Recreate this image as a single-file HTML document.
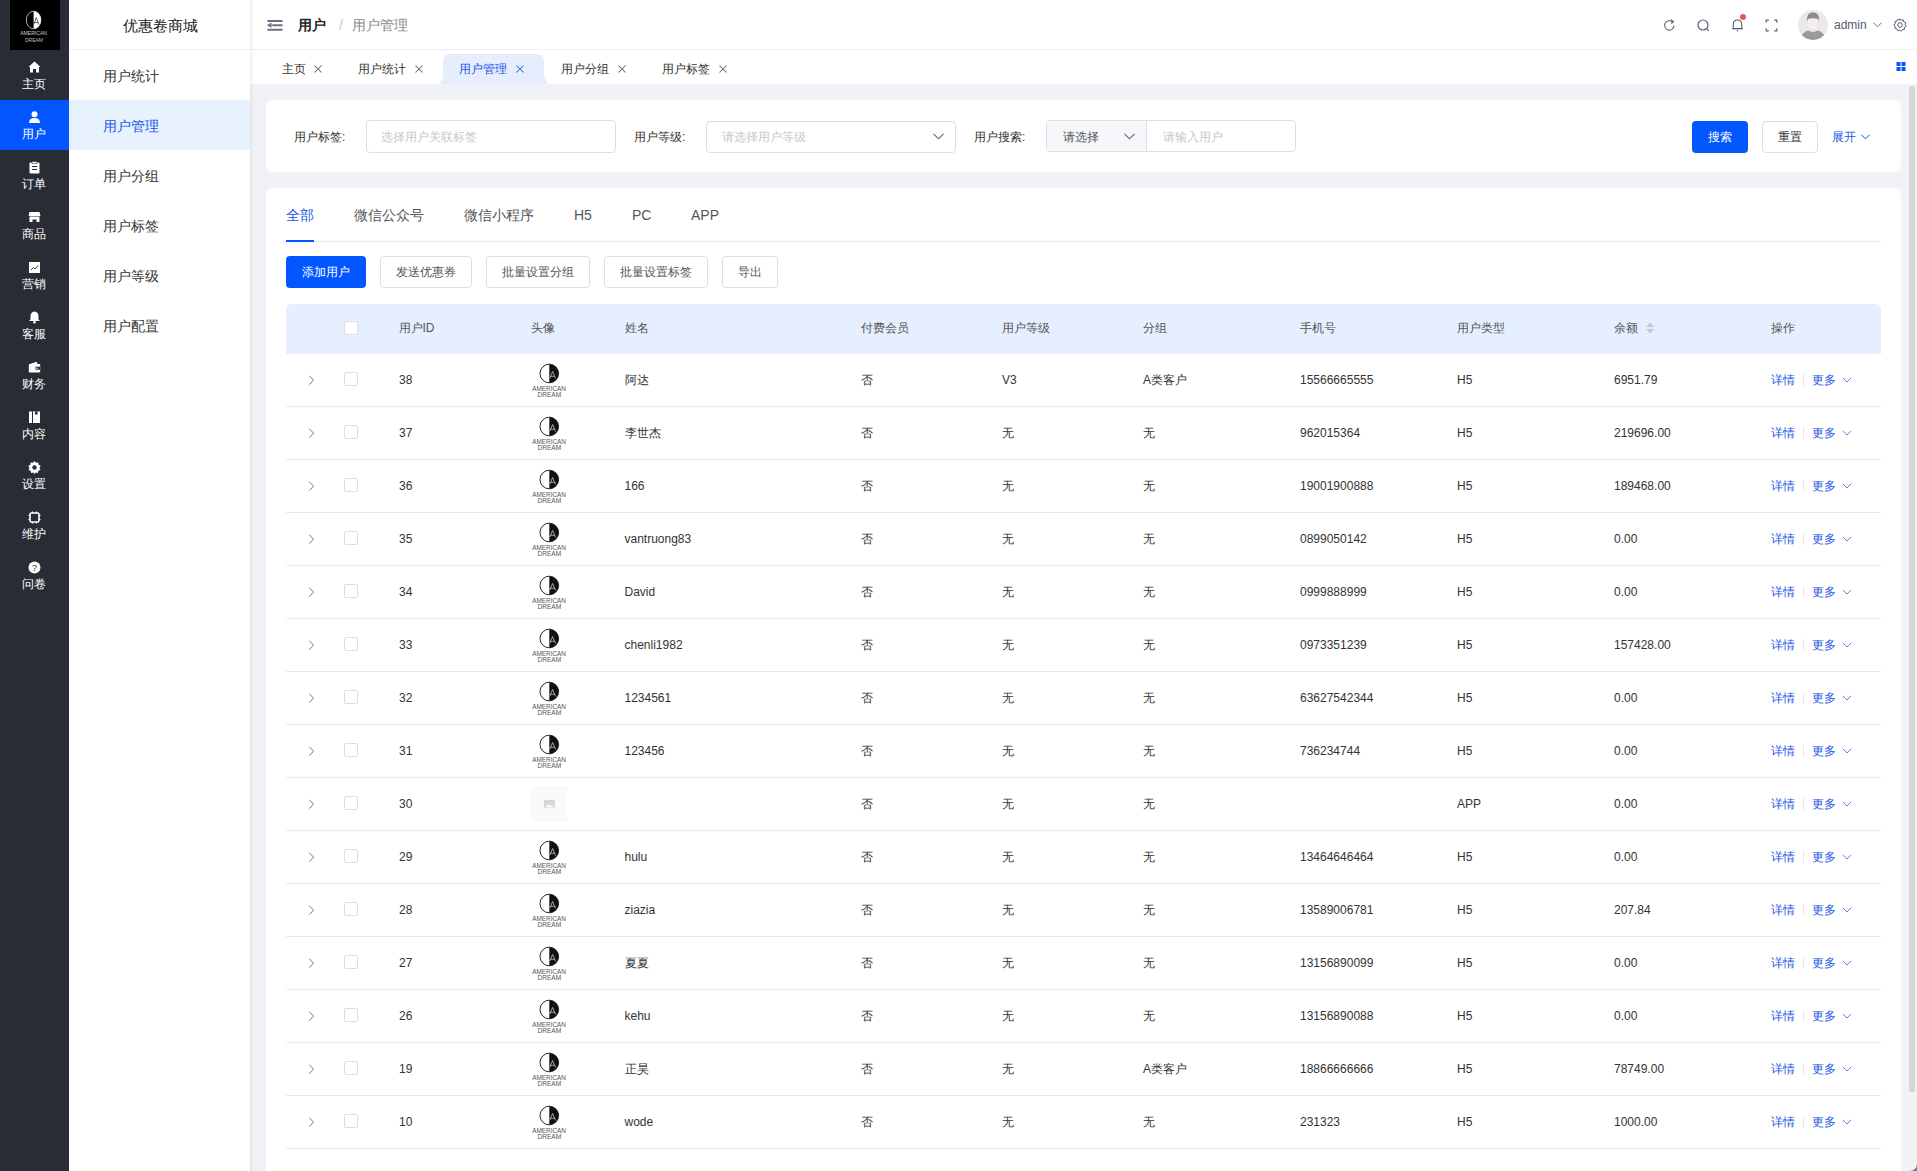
<!DOCTYPE html><html><head><meta charset="utf-8"><style>
*{box-sizing:border-box;margin:0;padding:0}
html,body{width:1917px;height:1171px;overflow:hidden;background:#f0f2f5;font-family:"Liberation Sans",sans-serif;}
.a{position:absolute}
.t{position:absolute;line-height:20px;white-space:nowrap}
svg{position:absolute;overflow:visible}
</style></head><body>
<div class="a" style="left:0;top:0;width:69px;height:1171px;background:#282c35"></div>
<div class="a" style="left:10px;top:0;width:50px;height:50px;background:#000"></div>
<svg style="left:10px;top:0" width="50" height="50" viewBox="0 0 50 50">
<ellipse cx="23.6" cy="20" rx="7.3" ry="8.8" fill="#000" stroke="#ddd" stroke-width="0.8"/>
<path d="M23.6 11.2 A7.3 8.8 0 0 1 23.6 28.8 Z" fill="#fff"/>
<path d="M23.8 24.5 L26.3 17.5 L28.8 24.5 M24.6 22.5 H28" fill="none" stroke="#000" stroke-width="0.6"/>
<text x="10.2" y="35.2" font-size="5.6" fill="#ccc" font-family="Liberation Sans" textLength="26.8" lengthAdjust="spacingAndGlyphs">AMERICAN</text>
<text x="14.9" y="41.6" font-size="5.6" fill="#bbb" font-family="Liberation Sans" textLength="18.1" lengthAdjust="spacingAndGlyphs">DREAM</text>
</svg>
<div class="t" style="left:22px;top:74.0px;font-size:12px;color:#fff;font-weight:500;">主页</div>
<div class="a ic0" style="left:28px;top:61px;width:13px;height:13px"></div>
<div class="a" style="left:0;top:100px;width:69px;height:50px;background:#0256ff"></div>
<div class="t" style="left:22px;top:124.0px;font-size:12px;color:#fff;font-weight:500;">用户</div>
<div class="a ic1" style="left:28px;top:111px;width:13px;height:13px"></div>
<div class="t" style="left:22px;top:174.0px;font-size:12px;color:#fff;font-weight:500;">订单</div>
<div class="a ic2" style="left:28px;top:161px;width:13px;height:13px"></div>
<div class="t" style="left:22px;top:224.0px;font-size:12px;color:#fff;font-weight:500;">商品</div>
<div class="a ic3" style="left:28px;top:211px;width:13px;height:13px"></div>
<div class="t" style="left:22px;top:274.0px;font-size:12px;color:#fff;font-weight:500;">营销</div>
<div class="a ic4" style="left:28px;top:261px;width:13px;height:13px"></div>
<div class="t" style="left:22px;top:324.0px;font-size:12px;color:#fff;font-weight:500;">客服</div>
<div class="a ic5" style="left:28px;top:311px;width:13px;height:13px"></div>
<div class="t" style="left:22px;top:374.0px;font-size:12px;color:#fff;font-weight:500;">财务</div>
<div class="a ic6" style="left:28px;top:361px;width:13px;height:13px"></div>
<div class="t" style="left:22px;top:424.0px;font-size:12px;color:#fff;font-weight:500;">内容</div>
<div class="a ic7" style="left:28px;top:411px;width:13px;height:13px"></div>
<div class="t" style="left:22px;top:474.0px;font-size:12px;color:#fff;font-weight:500;">设置</div>
<div class="a ic8" style="left:28px;top:461px;width:13px;height:13px"></div>
<div class="t" style="left:22px;top:524.0px;font-size:12px;color:#fff;font-weight:500;">维护</div>
<div class="a ic9" style="left:28px;top:511px;width:13px;height:13px"></div>
<div class="t" style="left:22px;top:574.0px;font-size:12px;color:#fff;font-weight:500;">问卷</div>
<div class="a ic10" style="left:28px;top:561px;width:13px;height:13px"></div>
<svg style="left:28px;top:61px" width="13" height="13" viewBox="0 0 13 13"><path d="M6.5 0.5 L12.5 6 L11 6 L11 11.5 L8 11.5 L8 8 L5 8 L5 11.5 L2 11.5 L2 6 L0.5 6 Z" fill="#fff"/></svg>
<svg style="left:28px;top:111px" width="13" height="13" viewBox="0 0 13 13"><circle cx="6.5" cy="3.2" r="3" fill="#fff"/><path d="M1 12 Q1 7 6.5 7 Q12 7 12 12 Z" fill="#fff"/></svg>
<svg style="left:28px;top:161px" width="13" height="13" viewBox="0 0 13 13"><rect x="1.5" y="1.5" width="10" height="11" rx="1" fill="#fff"/><rect x="4" y="0.5" width="5" height="2" fill="#fff" stroke="#282c35" stroke-width="0.6"/><rect x="4" y="5" width="5" height="1" fill="#282c35"/><rect x="4" y="8" width="5" height="1" fill="#282c35"/></svg>
<svg style="left:28px;top:211px" width="13" height="13" viewBox="0 0 13 13"><path d="M1.5 1 L11.5 1 L12.5 5 L0.5 5 Z" fill="#fff"/><path d="M1.5 5.5 L11.5 5.5 L11.5 11 L8.5 11 L8.5 8.5 L4.5 8.5 L4.5 11 L1.5 11 Z" fill="#fff"/></svg>
<svg style="left:28px;top:261px" width="13" height="13" viewBox="0 0 13 13"><rect x="1" y="1" width="11" height="11" fill="#fff"/><path d="M3 9 L5.5 6.5 L7 8 L10 4.5" fill="none" stroke="#282c35" stroke-width="0.9"/></svg>
<svg style="left:28px;top:311px" width="13" height="13" viewBox="0 0 13 13"><path d="M6.5 0.5 Q10.5 1 10.5 5.5 L10.5 8.5 L12 10 L1 10 L2.5 8.5 L2.5 5.5 Q2.5 1 6.5 0.5 Z" fill="#fff"/><circle cx="6.5" cy="11.3" r="1.3" fill="#fff"/></svg>
<svg style="left:28px;top:361px" width="13" height="13" viewBox="0 0 13 13"><path d="M2 3 L8.5 0.8 L9.5 3 Z" fill="#fff"/><rect x="0.8" y="3" width="11.4" height="8.5" rx="1" fill="#fff"/><rect x="7.5" y="5.7" width="4.7" height="3" fill="#282c35"/><circle cx="9" cy="7.2" r="0.8" fill="#fff"/></svg>
<svg style="left:28px;top:411px" width="13" height="13" viewBox="0 0 13 13"><rect x="1" y="0.5" width="11" height="11.5" fill="#fff"/><rect x="4" y="0.5" width="1" height="11.5" fill="#282c35"/><path d="M7 0.5 L9.5 0.5 L9.5 4 L8.25 3 L7 4 Z" fill="#282c35"/></svg>
<svg style="left:28px;top:461px" width="13" height="13" viewBox="0 0 13 13"><path d="M6.5 0 L8 1.8 L10.3 1.5 L10.7 3.8 L12.7 5 L11.5 7 L12.5 9 L10.3 9.8 L10 12 L7.8 11.5 L6.5 13 L5.2 11.5 L3 12 L2.7 9.8 L0.5 9 L1.5 7 L0.3 5 L2.3 3.8 L2.7 1.5 L5 1.8 Z" fill="#fff"/><circle cx="6.5" cy="6.5" r="2.2" fill="#282c35"/></svg>
<svg style="left:28px;top:511px" width="13" height="13" viewBox="0 0 13 13"><rect x="2" y="2" width="9" height="9" rx="1.5" fill="none" stroke="#fff" stroke-width="1.6"/><path d="M4.5 0.5v1.5M8.5 0.5v1.5M4.5 11v1.5M8.5 11v1.5M0.5 4.5h1.5M0.5 8.5h1.5M11 4.5h1.5M11 8.5h1.5" stroke="#fff" stroke-width="1.2"/></svg>
<svg style="left:28px;top:561px" width="13" height="13" viewBox="0 0 13 13"><circle cx="6.5" cy="6.5" r="6" fill="#fff"/><text x="6.5" y="10" font-size="9" fill="#282c35" text-anchor="middle" font-family="Liberation Sans">?</text></svg>
<div class="a" style="left:69px;top:0;width:181px;height:1171px;background:#fff"></div>
<div class="a" style="left:69px;top:49px;width:181px;height:1px;background:#eef0f4"></div>
<div class="t" style="left:122.5px;top:16.0px;font-size:15px;color:#1a1a1a;font-weight:normal;">优惠卷商城</div>
<div class="t" style="left:103px;top:65.5px;font-size:14px;color:#333;font-weight:normal;">用户统计</div>
<div class="a" style="left:69px;top:100px;width:181px;height:50px;background:#e8f2ff"></div>
<div class="t" style="left:103px;top:115.5px;font-size:14px;color:#1a56e6;font-weight:normal;">用户管理</div>
<div class="t" style="left:103px;top:165.5px;font-size:14px;color:#333;font-weight:normal;">用户分组</div>
<div class="t" style="left:103px;top:215.5px;font-size:14px;color:#333;font-weight:normal;">用户标签</div>
<div class="t" style="left:103px;top:265.5px;font-size:14px;color:#333;font-weight:normal;">用户等级</div>
<div class="t" style="left:103px;top:315.5px;font-size:14px;color:#333;font-weight:normal;">用户配置</div>
<div class="a" style="left:250px;top:84px;width:6px;height:1087px;background:linear-gradient(90deg,#e1e3e7,#edeff2 50%,#f0f2f5)"></div>
<div class="a" style="left:250px;top:0;width:1667px;height:49px;background:#fff"></div>
<div class="a" style="left:250px;top:49px;width:1667px;height:1px;background:#eef0f4"></div>
<svg style="left:266px;top:18px" width="16" height="14" viewBox="0 0 16 14">
<path d="M2.2 3h13.6M7 7.2h8.8M2.2 11.8h13.6" stroke="#6b7080" stroke-width="2" stroke-linecap="round"/>
<path d="M5.2 5.2 L1.5 7.2 L5.2 9.2 Z" fill="#6b7080" stroke="#6b7080" stroke-width="0.8" stroke-linejoin="round"/>
</svg>
<div class="t" style="left:298px;top:14.5px;font-size:14px;color:#222;font-weight:bold;">用户</div>
<div class="t" style="left:339px;top:14.5px;font-size:14px;color:#c0c4cc;font-weight:normal;">/</div>
<div class="t" style="left:352px;top:14.5px;font-size:14px;color:#888;font-weight:normal;">用户管理</div>
<svg style="left:1663px;top:19px" width="13" height="13" viewBox="0 0 13 13">
<path d="M11 6.5 A4.7 4.7 0 1 1 9.3 2.8" fill="none" stroke="#5c6170" stroke-width="1.1"/>
<path d="M8 0.8 L10.5 2.5 L8.3 4.5" fill="none" stroke="#5c6170" stroke-width="1.1"/>
</svg>
<svg style="left:1697px;top:19px" width="13" height="13" viewBox="0 0 13 13">
<circle cx="6" cy="6" r="5" fill="none" stroke="#5c6170" stroke-width="1.2"/>
<path d="M9.6 9.6 L11.8 11.8" stroke="#5c6170" stroke-width="1.2"/>
</svg>
<svg style="left:1731px;top:18px" width="13" height="14" viewBox="0 0 13 14">
<path d="M2.3 10.5 V6.5 Q2.3 2 6.5 2 Q10.7 2 10.7 6.5 V10.5 Z" fill="none" stroke="#5c6170" stroke-width="1.1"/>
<path d="M1 10.8 H12" stroke="#5c6170" stroke-width="1.1"/>
<circle cx="6.5" cy="12.8" r="0.7" fill="#5c6170"/>
</svg>
<div class="a" style="left:1740px;top:14px;width:6px;height:6px;border-radius:50%;background:#ee5555"></div>
<svg style="left:1765px;top:19px" width="13" height="13" viewBox="0 0 13 13">
<path d="M1.2 3.8V1.2H3.8M9.2 1.2H11.8V3.8M11.8 9.2V11.8H9.2M3.8 11.8H1.2V9.2" fill="none" stroke="#5c6170" stroke-width="1.2"/>
</svg>
<svg style="left:1798px;top:10px" width="30" height="30" viewBox="0 0 30 30">
<defs><clipPath id="avc"><circle cx="15" cy="15" r="15"/></clipPath></defs>
<g clip-path="url(#avc)">
<rect width="30" height="30" fill="#e9e9e9"/>
<path d="M2 31 Q3 22.5 10 20.5 Q15 23 20 20.5 Q27 22.5 28 31 Z" fill="#9a9a9a"/>
<path d="M10.5 17 Q11 21.5 15 22 Q19 21.5 19.5 17 Z" fill="#e6dedc"/>
<ellipse cx="15" cy="13.2" rx="5.6" ry="7.2" fill="#f3eeec"/>
<path d="M9 12.5 Q8 2.2 15 2.2 Q22 2.2 21 12.5 L20.3 9 Q15 7.5 9.7 9 Z" fill="#8c8c8c"/>
</g></svg>
<div class="t" style="left:1834px;top:14.5px;font-size:12px;color:#515a6e;font-weight:normal;">admin</div>
<svg style="left:1873px;top:22px" width="9" height="6" viewBox="0 0 9 6">
<path d="M0.5 0.8 L4.5 4.8 L8.5 0.8" fill="none" stroke="#777" stroke-width="1"/></svg>
<svg style="left:1893px;top:18px" width="14" height="14" viewBox="0 0 14 14">
<path d="M7 0.8 L8.3 2.3 L10.3 1.9 L10.8 3.9 L12.7 4.7 L12 6.6 L13.2 8.3 L11.5 9.4 L11.4 11.4 L9.4 11.5 L8.3 13.2 L6.6 12 L4.7 12.7 L3.9 10.8 L1.9 10.3 L2.3 8.3 L0.8 7 L2.3 5.7 L1.9 3.7 L3.9 3.2 L4.7 1.3 L6.6 2 Z" fill="none" stroke="#5c6170" stroke-width="1" stroke-linejoin="round"/>
<circle cx="7" cy="7" r="2.3" fill="none" stroke="#5c6170" stroke-width="1"/>
</svg>
<div class="a" style="left:250px;top:50px;width:1667px;height:34px;background:#fff"></div>
<svg style="left:439px;top:54px" width="110" height="30" viewBox="0 0 110 30">
<path d="M0.5 30 L4 23 V7.5 Q4 0 11.5 0 H97.5 Q105 0 105 7.5 V23 L109.5 30 Z" fill="#e6eefd"/></svg>
<div class="t" style="left:282px;top:59.0px;font-size:12px;color:#333;font-weight:normal;">主页</div>
<svg style="left:314px;top:65px" width="8" height="8" viewBox="0 0 8 8"><path d="M0.5 0.5 L7.5 7.5 M7.5 0.5 L0.5 7.5" stroke="#666" stroke-width="1.05"/></svg>
<div class="t" style="left:358px;top:59.0px;font-size:12px;color:#333;font-weight:normal;">用户统计</div>
<svg style="left:415px;top:65px" width="8" height="8" viewBox="0 0 8 8"><path d="M0.5 0.5 L7.5 7.5 M7.5 0.5 L0.5 7.5" stroke="#666" stroke-width="1.05"/></svg>
<div class="t" style="left:459px;top:59.0px;font-size:12px;color:#1a56e6;font-weight:normal;">用户管理</div>
<svg style="left:516px;top:65px" width="8" height="8" viewBox="0 0 8 8"><path d="M0.5 0.5 L7.5 7.5 M7.5 0.5 L0.5 7.5" stroke="#2f6bea" stroke-width="1.05"/></svg>
<div class="t" style="left:561px;top:59.0px;font-size:12px;color:#333;font-weight:normal;">用户分组</div>
<svg style="left:618px;top:65px" width="8" height="8" viewBox="0 0 8 8"><path d="M0.5 0.5 L7.5 7.5 M7.5 0.5 L0.5 7.5" stroke="#666" stroke-width="1.05"/></svg>
<div class="t" style="left:662px;top:59.0px;font-size:12px;color:#333;font-weight:normal;">用户标签</div>
<svg style="left:719px;top:65px" width="8" height="8" viewBox="0 0 8 8"><path d="M0.5 0.5 L7.5 7.5 M7.5 0.5 L0.5 7.5" stroke="#666" stroke-width="1.05"/></svg>
<svg style="left:1896px;top:62px" width="10" height="9" viewBox="0 0 10 9">
<rect x="0.5" y="0" width="4" height="4" fill="#0256ff"/><rect x="5.5" y="0" width="4" height="4" fill="#0256ff"/>
<rect x="0.5" y="5" width="4" height="4" fill="#0256ff"/><rect x="5.5" y="5" width="4" height="4" fill="#0256ff"/></svg>
<div class="a" style="left:250px;top:0;width:5px;height:84px;background:linear-gradient(90deg,#eceef2,#f8f9fb 50%,rgba(255,255,255,0))"></div>
<div class="a" style="left:250px;top:49px;width:5px;height:1px;background:#e6e8ec"></div>
<div class="a" style="left:1909px;top:86px;width:6px;height:1006px;border-radius:3px;background:#d3d5d9"></div>
<div class="a" style="left:266px;top:100px;width:1635px;height:72px;background:#fff;border-radius:6px"></div>
<div class="t" style="left:294px;top:126.5px;font-size:12px;color:#333;font-weight:normal;">用户标签:</div>
<div class="a" style="left:366px;top:120px;width:250px;height:33px;border:1px solid #dcdee2;border-radius:4px;background:#fff"></div>
<div class="t" style="left:381px;top:127.0px;font-size:12px;color:#c5c8ce;font-weight:normal;">选择用户关联标签</div>
<div class="t" style="left:634px;top:126.5px;font-size:12px;color:#333;font-weight:normal;">用户等级:</div>
<div class="a" style="left:706px;top:121px;width:250px;height:32px;border:1px solid #dcdee2;border-radius:4px;background:#fff"></div>
<div class="t" style="left:722px;top:127.0px;font-size:12px;color:#c5c8ce;font-weight:normal;">请选择用户等级</div>
<svg style="left:933px;top:133px" width="11" height="7" viewBox="0 0 11 7"><path d="M0.5 0.8 L5.5 5.8 L10.5 0.8" fill="none" stroke="#666" stroke-width="1.1"/></svg>
<div class="t" style="left:974px;top:126.5px;font-size:12px;color:#333;font-weight:normal;">用户搜索:</div>
<div class="a" style="left:1046px;top:120px;width:250px;height:32px;border:1px solid #dcdee2;border-radius:4px;background:#fff"></div>
<div class="a" style="left:1047px;top:121px;width:100px;height:30px;border-right:1px solid #dcdee2;border-radius:3px 0 0 3px;background:#f5f7fa"></div>
<div class="t" style="left:1063px;top:127.0px;font-size:12px;color:#555;font-weight:normal;">请选择</div>
<svg style="left:1124px;top:133px" width="11" height="7" viewBox="0 0 11 7"><path d="M0.5 0.8 L5.5 5.8 L10.5 0.8" fill="none" stroke="#666" stroke-width="1.1"/></svg>
<div class="t" style="left:1163px;top:126.5px;font-size:12px;color:#c5c8ce;font-weight:normal;">请输入用户</div>
<div class="a" style="left:1692px;top:121px;width:56px;height:32px;border-radius:4px;background:#0256ff"></div>
<div class="t" style="left:1708px;top:126.5px;font-size:12px;color:#fff;font-weight:normal;">搜索</div>
<div class="a" style="left:1762px;top:121px;width:56px;height:32px;border-radius:4px;border:1px solid #dcdee2;background:#fff"></div>
<div class="t" style="left:1778px;top:126.5px;font-size:12px;color:#333;font-weight:normal;">重置</div>
<div class="t" style="left:1832px;top:127.0px;font-size:12px;color:#1a56e6;font-weight:normal;">展开</div>
<svg style="left:1861px;top:134px" width="9" height="6" viewBox="0 0 9 6"><path d="M0.5 0.8 L4.5 4.8 L8.5 0.8" fill="none" stroke="#0256ff" stroke-width="1"/></svg>
<div class="a" style="left:266px;top:188px;width:1635px;height:1000px;background:#fff;border-radius:6px"></div>
<div class="t" style="left:286px;top:204.5px;font-size:14px;color:#1a56e6;font-weight:normal;">全部</div>
<div class="t" style="left:354px;top:204.5px;font-size:14px;color:#555;font-weight:normal;">微信公众号</div>
<div class="t" style="left:464px;top:204.5px;font-size:14px;color:#555;font-weight:normal;">微信小程序</div>
<div class="t" style="left:574px;top:204.5px;font-size:14px;color:#555;font-weight:normal;">H5</div>
<div class="t" style="left:632px;top:204.5px;font-size:14px;color:#555;font-weight:normal;">PC</div>
<div class="t" style="left:691px;top:204.5px;font-size:14px;color:#555;font-weight:normal;">APP</div>
<div class="a" style="left:286px;top:241px;width:1595px;height:1px;background:#e8eaec"></div>
<div class="a" style="left:286px;top:240px;width:28px;height:2px;background:#0256ff"></div>
<div class="a" style="left:286px;top:256px;width:80px;height:32px;border-radius:4px;background:#0256ff"></div>
<div class="t" style="left:302px;top:261.5px;font-size:12px;color:#fff;font-weight:normal;">添加用户</div>
<div class="a" style="left:380px;top:256px;width:92px;height:32px;border-radius:4px;border:1px solid #dcdee2;background:#fff"></div>
<div class="t" style="left:396px;top:261.5px;font-size:12px;color:#555;font-weight:normal;">发送优惠券</div>
<div class="a" style="left:486px;top:256px;width:104px;height:32px;border-radius:4px;border:1px solid #dcdee2;background:#fff"></div>
<div class="t" style="left:502px;top:261.5px;font-size:12px;color:#555;font-weight:normal;">批量设置分组</div>
<div class="a" style="left:604px;top:256px;width:104px;height:32px;border-radius:4px;border:1px solid #dcdee2;background:#fff"></div>
<div class="t" style="left:620px;top:261.5px;font-size:12px;color:#555;font-weight:normal;">批量设置标签</div>
<div class="a" style="left:722px;top:256px;width:56px;height:32px;border-radius:4px;border:1px solid #dcdee2;background:#fff"></div>
<div class="t" style="left:738px;top:261.5px;font-size:12px;color:#555;font-weight:normal;">导出</div>
<div class="a" style="left:286px;top:304px;width:1595px;height:50px;background:#e5efff;border-radius:5px 5px 0 0"></div>
<div class="t" style="left:398.5px;top:317.5px;font-size:12px;color:#555;font-weight:normal;">用户ID</div>
<div class="t" style="left:531px;top:317.5px;font-size:12px;color:#555;font-weight:normal;">头像</div>
<div class="t" style="left:624.5px;top:317.5px;font-size:12px;color:#555;font-weight:normal;">姓名</div>
<div class="t" style="left:861px;top:317.5px;font-size:12px;color:#555;font-weight:normal;">付费会员</div>
<div class="t" style="left:1002px;top:317.5px;font-size:12px;color:#555;font-weight:normal;">用户等级</div>
<div class="t" style="left:1143px;top:317.5px;font-size:12px;color:#555;font-weight:normal;">分组</div>
<div class="t" style="left:1300px;top:317.5px;font-size:12px;color:#555;font-weight:normal;">手机号</div>
<div class="t" style="left:1457px;top:317.5px;font-size:12px;color:#555;font-weight:normal;">用户类型</div>
<div class="t" style="left:1614px;top:317.5px;font-size:12px;color:#555;font-weight:normal;">余额</div>
<div class="t" style="left:1771px;top:317.5px;font-size:12px;color:#555;font-weight:normal;">操作</div>
<div class="a" style="left:344px;top:321px;width:14px;height:14px;border:1px solid #dcdee2;border-radius:2px;background:#fff"></div>
<svg style="left:1645px;top:322px" width="10" height="12" viewBox="0 0 10 12"><path d="M5 0.5 L9 5 L1 5 Z" fill="#c5c8ce"/><path d="M5 11.5 L9 7 L1 7 Z" fill="#c5c8ce"/></svg>
<div class="a" style="left:286px;top:406px;width:1595px;height:1px;background:#e8eaec"></div>
<svg style="left:309px;top:375.0px" width="6" height="10" viewBox="0 0 6 10"><path d="M0.3 0.8 L4.6 5.2 L0.3 9.6" fill="none" stroke="#777" stroke-width="1"/></svg>
<div class="a" style="left:344px;top:372.0px;width:14px;height:14px;border:1px solid #dcdee2;border-radius:2px;background:#fff"></div>
<div class="t" style="left:399px;top:370.0px;font-size:12px;color:#333;font-weight:normal;">38</div>
<svg style="left:531px;top:361.5px" width="36" height="36" viewBox="0 0 36 36">
<circle cx="18.3" cy="11.5" r="9.3" fill="none" stroke="#111" stroke-width="0.9"/>
<path d="M18.3 2.2 A9.3 9.3 0 0 1 18.3 20.8 Z" fill="#111"/>
<path d="M18.6 16.5 L21.6 9.5 L24.6 16.5 M19.6 14.3 H23.6" fill="none" stroke="#fff" stroke-width="0.6"/>
<path d="M18.3 16 L18.6 16.5" stroke="#111" stroke-width="0.6"/>
<text x="1.2" y="28.5" font-size="6.8" fill="#555" font-family="Liberation Sans" textLength="33.7" lengthAdjust="spacingAndGlyphs">AMERICAN</text>
<text x="6.5" y="35.3" font-size="6.8" fill="#555" font-family="Liberation Sans" textLength="23.6" lengthAdjust="spacingAndGlyphs">DREAM</text>
</svg>
<div class="t" style="left:624.5px;top:370.0px;font-size:12px;color:#333;font-weight:normal;">阿达</div>
<div class="t" style="left:861px;top:370.0px;font-size:12px;color:#333;font-weight:normal;">否</div>
<div class="t" style="left:1002px;top:370.0px;font-size:12px;color:#333;font-weight:normal;">V3</div>
<div class="t" style="left:1143px;top:370.0px;font-size:12px;color:#333;font-weight:normal;">A类客户</div>
<div class="t" style="left:1300px;top:370.0px;font-size:12px;color:#333;font-weight:normal;">15566665555</div>
<div class="t" style="left:1457px;top:370.0px;font-size:12px;color:#333;font-weight:normal;">H5</div>
<div class="t" style="left:1614px;top:370.0px;font-size:12px;color:#333;font-weight:normal;">6951.79</div>
<div class="t" style="left:1771px;top:370.0px;font-size:12px;color:#1a56e6;font-weight:normal;">详情</div>
<div class="a" style="left:1803px;top:373.5px;width:1px;height:12px;background:#e6e8ee"></div>
<div class="t" style="left:1812px;top:370.0px;font-size:12px;color:#1a56e6;font-weight:normal;">更多</div>
<svg style="left:1842px;top:377.0px" width="10" height="6" viewBox="0 0 10 6"><path d="M0.8 0.8 L5 5 L9.2 0.8" fill="none" stroke="#4d75dc" stroke-width="0.9"/></svg>
<div class="a" style="left:286px;top:459px;width:1595px;height:1px;background:#e8eaec"></div>
<svg style="left:309px;top:428.0px" width="6" height="10" viewBox="0 0 6 10"><path d="M0.3 0.8 L4.6 5.2 L0.3 9.6" fill="none" stroke="#777" stroke-width="1"/></svg>
<div class="a" style="left:344px;top:425.0px;width:14px;height:14px;border:1px solid #dcdee2;border-radius:2px;background:#fff"></div>
<div class="t" style="left:399px;top:423.0px;font-size:12px;color:#333;font-weight:normal;">37</div>
<svg style="left:531px;top:414.5px" width="36" height="36" viewBox="0 0 36 36">
<circle cx="18.3" cy="11.5" r="9.3" fill="none" stroke="#111" stroke-width="0.9"/>
<path d="M18.3 2.2 A9.3 9.3 0 0 1 18.3 20.8 Z" fill="#111"/>
<path d="M18.6 16.5 L21.6 9.5 L24.6 16.5 M19.6 14.3 H23.6" fill="none" stroke="#fff" stroke-width="0.6"/>
<path d="M18.3 16 L18.6 16.5" stroke="#111" stroke-width="0.6"/>
<text x="1.2" y="28.5" font-size="6.8" fill="#555" font-family="Liberation Sans" textLength="33.7" lengthAdjust="spacingAndGlyphs">AMERICAN</text>
<text x="6.5" y="35.3" font-size="6.8" fill="#555" font-family="Liberation Sans" textLength="23.6" lengthAdjust="spacingAndGlyphs">DREAM</text>
</svg>
<div class="t" style="left:624.5px;top:423.0px;font-size:12px;color:#333;font-weight:normal;">李世杰</div>
<div class="t" style="left:861px;top:423.0px;font-size:12px;color:#333;font-weight:normal;">否</div>
<div class="t" style="left:1002px;top:423.0px;font-size:12px;color:#333;font-weight:normal;">无</div>
<div class="t" style="left:1143px;top:423.0px;font-size:12px;color:#333;font-weight:normal;">无</div>
<div class="t" style="left:1300px;top:423.0px;font-size:12px;color:#333;font-weight:normal;">962015364</div>
<div class="t" style="left:1457px;top:423.0px;font-size:12px;color:#333;font-weight:normal;">H5</div>
<div class="t" style="left:1614px;top:423.0px;font-size:12px;color:#333;font-weight:normal;">219696.00</div>
<div class="t" style="left:1771px;top:423.0px;font-size:12px;color:#1a56e6;font-weight:normal;">详情</div>
<div class="a" style="left:1803px;top:426.5px;width:1px;height:12px;background:#e6e8ee"></div>
<div class="t" style="left:1812px;top:423.0px;font-size:12px;color:#1a56e6;font-weight:normal;">更多</div>
<svg style="left:1842px;top:430.0px" width="10" height="6" viewBox="0 0 10 6"><path d="M0.8 0.8 L5 5 L9.2 0.8" fill="none" stroke="#4d75dc" stroke-width="0.9"/></svg>
<div class="a" style="left:286px;top:512px;width:1595px;height:1px;background:#e8eaec"></div>
<svg style="left:309px;top:481.0px" width="6" height="10" viewBox="0 0 6 10"><path d="M0.3 0.8 L4.6 5.2 L0.3 9.6" fill="none" stroke="#777" stroke-width="1"/></svg>
<div class="a" style="left:344px;top:478.0px;width:14px;height:14px;border:1px solid #dcdee2;border-radius:2px;background:#fff"></div>
<div class="t" style="left:399px;top:476.0px;font-size:12px;color:#333;font-weight:normal;">36</div>
<svg style="left:531px;top:467.5px" width="36" height="36" viewBox="0 0 36 36">
<circle cx="18.3" cy="11.5" r="9.3" fill="none" stroke="#111" stroke-width="0.9"/>
<path d="M18.3 2.2 A9.3 9.3 0 0 1 18.3 20.8 Z" fill="#111"/>
<path d="M18.6 16.5 L21.6 9.5 L24.6 16.5 M19.6 14.3 H23.6" fill="none" stroke="#fff" stroke-width="0.6"/>
<path d="M18.3 16 L18.6 16.5" stroke="#111" stroke-width="0.6"/>
<text x="1.2" y="28.5" font-size="6.8" fill="#555" font-family="Liberation Sans" textLength="33.7" lengthAdjust="spacingAndGlyphs">AMERICAN</text>
<text x="6.5" y="35.3" font-size="6.8" fill="#555" font-family="Liberation Sans" textLength="23.6" lengthAdjust="spacingAndGlyphs">DREAM</text>
</svg>
<div class="t" style="left:624.5px;top:476.0px;font-size:12px;color:#333;font-weight:normal;">166</div>
<div class="t" style="left:861px;top:476.0px;font-size:12px;color:#333;font-weight:normal;">否</div>
<div class="t" style="left:1002px;top:476.0px;font-size:12px;color:#333;font-weight:normal;">无</div>
<div class="t" style="left:1143px;top:476.0px;font-size:12px;color:#333;font-weight:normal;">无</div>
<div class="t" style="left:1300px;top:476.0px;font-size:12px;color:#333;font-weight:normal;">19001900888</div>
<div class="t" style="left:1457px;top:476.0px;font-size:12px;color:#333;font-weight:normal;">H5</div>
<div class="t" style="left:1614px;top:476.0px;font-size:12px;color:#333;font-weight:normal;">189468.00</div>
<div class="t" style="left:1771px;top:476.0px;font-size:12px;color:#1a56e6;font-weight:normal;">详情</div>
<div class="a" style="left:1803px;top:479.5px;width:1px;height:12px;background:#e6e8ee"></div>
<div class="t" style="left:1812px;top:476.0px;font-size:12px;color:#1a56e6;font-weight:normal;">更多</div>
<svg style="left:1842px;top:483.0px" width="10" height="6" viewBox="0 0 10 6"><path d="M0.8 0.8 L5 5 L9.2 0.8" fill="none" stroke="#4d75dc" stroke-width="0.9"/></svg>
<div class="a" style="left:286px;top:565px;width:1595px;height:1px;background:#e8eaec"></div>
<svg style="left:309px;top:534.0px" width="6" height="10" viewBox="0 0 6 10"><path d="M0.3 0.8 L4.6 5.2 L0.3 9.6" fill="none" stroke="#777" stroke-width="1"/></svg>
<div class="a" style="left:344px;top:531.0px;width:14px;height:14px;border:1px solid #dcdee2;border-radius:2px;background:#fff"></div>
<div class="t" style="left:399px;top:529.0px;font-size:12px;color:#333;font-weight:normal;">35</div>
<svg style="left:531px;top:520.5px" width="36" height="36" viewBox="0 0 36 36">
<circle cx="18.3" cy="11.5" r="9.3" fill="none" stroke="#111" stroke-width="0.9"/>
<path d="M18.3 2.2 A9.3 9.3 0 0 1 18.3 20.8 Z" fill="#111"/>
<path d="M18.6 16.5 L21.6 9.5 L24.6 16.5 M19.6 14.3 H23.6" fill="none" stroke="#fff" stroke-width="0.6"/>
<path d="M18.3 16 L18.6 16.5" stroke="#111" stroke-width="0.6"/>
<text x="1.2" y="28.5" font-size="6.8" fill="#555" font-family="Liberation Sans" textLength="33.7" lengthAdjust="spacingAndGlyphs">AMERICAN</text>
<text x="6.5" y="35.3" font-size="6.8" fill="#555" font-family="Liberation Sans" textLength="23.6" lengthAdjust="spacingAndGlyphs">DREAM</text>
</svg>
<div class="t" style="left:624.5px;top:529.0px;font-size:12px;color:#333;font-weight:normal;">vantruong83</div>
<div class="t" style="left:861px;top:529.0px;font-size:12px;color:#333;font-weight:normal;">否</div>
<div class="t" style="left:1002px;top:529.0px;font-size:12px;color:#333;font-weight:normal;">无</div>
<div class="t" style="left:1143px;top:529.0px;font-size:12px;color:#333;font-weight:normal;">无</div>
<div class="t" style="left:1300px;top:529.0px;font-size:12px;color:#333;font-weight:normal;">0899050142</div>
<div class="t" style="left:1457px;top:529.0px;font-size:12px;color:#333;font-weight:normal;">H5</div>
<div class="t" style="left:1614px;top:529.0px;font-size:12px;color:#333;font-weight:normal;">0.00</div>
<div class="t" style="left:1771px;top:529.0px;font-size:12px;color:#1a56e6;font-weight:normal;">详情</div>
<div class="a" style="left:1803px;top:532.5px;width:1px;height:12px;background:#e6e8ee"></div>
<div class="t" style="left:1812px;top:529.0px;font-size:12px;color:#1a56e6;font-weight:normal;">更多</div>
<svg style="left:1842px;top:536.0px" width="10" height="6" viewBox="0 0 10 6"><path d="M0.8 0.8 L5 5 L9.2 0.8" fill="none" stroke="#4d75dc" stroke-width="0.9"/></svg>
<div class="a" style="left:286px;top:618px;width:1595px;height:1px;background:#e8eaec"></div>
<svg style="left:309px;top:587.0px" width="6" height="10" viewBox="0 0 6 10"><path d="M0.3 0.8 L4.6 5.2 L0.3 9.6" fill="none" stroke="#777" stroke-width="1"/></svg>
<div class="a" style="left:344px;top:584.0px;width:14px;height:14px;border:1px solid #dcdee2;border-radius:2px;background:#fff"></div>
<div class="t" style="left:399px;top:582.0px;font-size:12px;color:#333;font-weight:normal;">34</div>
<svg style="left:531px;top:573.5px" width="36" height="36" viewBox="0 0 36 36">
<circle cx="18.3" cy="11.5" r="9.3" fill="none" stroke="#111" stroke-width="0.9"/>
<path d="M18.3 2.2 A9.3 9.3 0 0 1 18.3 20.8 Z" fill="#111"/>
<path d="M18.6 16.5 L21.6 9.5 L24.6 16.5 M19.6 14.3 H23.6" fill="none" stroke="#fff" stroke-width="0.6"/>
<path d="M18.3 16 L18.6 16.5" stroke="#111" stroke-width="0.6"/>
<text x="1.2" y="28.5" font-size="6.8" fill="#555" font-family="Liberation Sans" textLength="33.7" lengthAdjust="spacingAndGlyphs">AMERICAN</text>
<text x="6.5" y="35.3" font-size="6.8" fill="#555" font-family="Liberation Sans" textLength="23.6" lengthAdjust="spacingAndGlyphs">DREAM</text>
</svg>
<div class="t" style="left:624.5px;top:582.0px;font-size:12px;color:#333;font-weight:normal;">David</div>
<div class="t" style="left:861px;top:582.0px;font-size:12px;color:#333;font-weight:normal;">否</div>
<div class="t" style="left:1002px;top:582.0px;font-size:12px;color:#333;font-weight:normal;">无</div>
<div class="t" style="left:1143px;top:582.0px;font-size:12px;color:#333;font-weight:normal;">无</div>
<div class="t" style="left:1300px;top:582.0px;font-size:12px;color:#333;font-weight:normal;">0999888999</div>
<div class="t" style="left:1457px;top:582.0px;font-size:12px;color:#333;font-weight:normal;">H5</div>
<div class="t" style="left:1614px;top:582.0px;font-size:12px;color:#333;font-weight:normal;">0.00</div>
<div class="t" style="left:1771px;top:582.0px;font-size:12px;color:#1a56e6;font-weight:normal;">详情</div>
<div class="a" style="left:1803px;top:585.5px;width:1px;height:12px;background:#e6e8ee"></div>
<div class="t" style="left:1812px;top:582.0px;font-size:12px;color:#1a56e6;font-weight:normal;">更多</div>
<svg style="left:1842px;top:589.0px" width="10" height="6" viewBox="0 0 10 6"><path d="M0.8 0.8 L5 5 L9.2 0.8" fill="none" stroke="#4d75dc" stroke-width="0.9"/></svg>
<div class="a" style="left:286px;top:671px;width:1595px;height:1px;background:#e8eaec"></div>
<svg style="left:309px;top:640.0px" width="6" height="10" viewBox="0 0 6 10"><path d="M0.3 0.8 L4.6 5.2 L0.3 9.6" fill="none" stroke="#777" stroke-width="1"/></svg>
<div class="a" style="left:344px;top:637.0px;width:14px;height:14px;border:1px solid #dcdee2;border-radius:2px;background:#fff"></div>
<div class="t" style="left:399px;top:635.0px;font-size:12px;color:#333;font-weight:normal;">33</div>
<svg style="left:531px;top:626.5px" width="36" height="36" viewBox="0 0 36 36">
<circle cx="18.3" cy="11.5" r="9.3" fill="none" stroke="#111" stroke-width="0.9"/>
<path d="M18.3 2.2 A9.3 9.3 0 0 1 18.3 20.8 Z" fill="#111"/>
<path d="M18.6 16.5 L21.6 9.5 L24.6 16.5 M19.6 14.3 H23.6" fill="none" stroke="#fff" stroke-width="0.6"/>
<path d="M18.3 16 L18.6 16.5" stroke="#111" stroke-width="0.6"/>
<text x="1.2" y="28.5" font-size="6.8" fill="#555" font-family="Liberation Sans" textLength="33.7" lengthAdjust="spacingAndGlyphs">AMERICAN</text>
<text x="6.5" y="35.3" font-size="6.8" fill="#555" font-family="Liberation Sans" textLength="23.6" lengthAdjust="spacingAndGlyphs">DREAM</text>
</svg>
<div class="t" style="left:624.5px;top:635.0px;font-size:12px;color:#333;font-weight:normal;">chenli1982</div>
<div class="t" style="left:861px;top:635.0px;font-size:12px;color:#333;font-weight:normal;">否</div>
<div class="t" style="left:1002px;top:635.0px;font-size:12px;color:#333;font-weight:normal;">无</div>
<div class="t" style="left:1143px;top:635.0px;font-size:12px;color:#333;font-weight:normal;">无</div>
<div class="t" style="left:1300px;top:635.0px;font-size:12px;color:#333;font-weight:normal;">0973351239</div>
<div class="t" style="left:1457px;top:635.0px;font-size:12px;color:#333;font-weight:normal;">H5</div>
<div class="t" style="left:1614px;top:635.0px;font-size:12px;color:#333;font-weight:normal;">157428.00</div>
<div class="t" style="left:1771px;top:635.0px;font-size:12px;color:#1a56e6;font-weight:normal;">详情</div>
<div class="a" style="left:1803px;top:638.5px;width:1px;height:12px;background:#e6e8ee"></div>
<div class="t" style="left:1812px;top:635.0px;font-size:12px;color:#1a56e6;font-weight:normal;">更多</div>
<svg style="left:1842px;top:642.0px" width="10" height="6" viewBox="0 0 10 6"><path d="M0.8 0.8 L5 5 L9.2 0.8" fill="none" stroke="#4d75dc" stroke-width="0.9"/></svg>
<div class="a" style="left:286px;top:724px;width:1595px;height:1px;background:#e8eaec"></div>
<svg style="left:309px;top:693.0px" width="6" height="10" viewBox="0 0 6 10"><path d="M0.3 0.8 L4.6 5.2 L0.3 9.6" fill="none" stroke="#777" stroke-width="1"/></svg>
<div class="a" style="left:344px;top:690.0px;width:14px;height:14px;border:1px solid #dcdee2;border-radius:2px;background:#fff"></div>
<div class="t" style="left:399px;top:688.0px;font-size:12px;color:#333;font-weight:normal;">32</div>
<svg style="left:531px;top:679.5px" width="36" height="36" viewBox="0 0 36 36">
<circle cx="18.3" cy="11.5" r="9.3" fill="none" stroke="#111" stroke-width="0.9"/>
<path d="M18.3 2.2 A9.3 9.3 0 0 1 18.3 20.8 Z" fill="#111"/>
<path d="M18.6 16.5 L21.6 9.5 L24.6 16.5 M19.6 14.3 H23.6" fill="none" stroke="#fff" stroke-width="0.6"/>
<path d="M18.3 16 L18.6 16.5" stroke="#111" stroke-width="0.6"/>
<text x="1.2" y="28.5" font-size="6.8" fill="#555" font-family="Liberation Sans" textLength="33.7" lengthAdjust="spacingAndGlyphs">AMERICAN</text>
<text x="6.5" y="35.3" font-size="6.8" fill="#555" font-family="Liberation Sans" textLength="23.6" lengthAdjust="spacingAndGlyphs">DREAM</text>
</svg>
<div class="t" style="left:624.5px;top:688.0px;font-size:12px;color:#333;font-weight:normal;">1234561</div>
<div class="t" style="left:861px;top:688.0px;font-size:12px;color:#333;font-weight:normal;">否</div>
<div class="t" style="left:1002px;top:688.0px;font-size:12px;color:#333;font-weight:normal;">无</div>
<div class="t" style="left:1143px;top:688.0px;font-size:12px;color:#333;font-weight:normal;">无</div>
<div class="t" style="left:1300px;top:688.0px;font-size:12px;color:#333;font-weight:normal;">63627542344</div>
<div class="t" style="left:1457px;top:688.0px;font-size:12px;color:#333;font-weight:normal;">H5</div>
<div class="t" style="left:1614px;top:688.0px;font-size:12px;color:#333;font-weight:normal;">0.00</div>
<div class="t" style="left:1771px;top:688.0px;font-size:12px;color:#1a56e6;font-weight:normal;">详情</div>
<div class="a" style="left:1803px;top:691.5px;width:1px;height:12px;background:#e6e8ee"></div>
<div class="t" style="left:1812px;top:688.0px;font-size:12px;color:#1a56e6;font-weight:normal;">更多</div>
<svg style="left:1842px;top:695.0px" width="10" height="6" viewBox="0 0 10 6"><path d="M0.8 0.8 L5 5 L9.2 0.8" fill="none" stroke="#4d75dc" stroke-width="0.9"/></svg>
<div class="a" style="left:286px;top:777px;width:1595px;height:1px;background:#e8eaec"></div>
<svg style="left:309px;top:746.0px" width="6" height="10" viewBox="0 0 6 10"><path d="M0.3 0.8 L4.6 5.2 L0.3 9.6" fill="none" stroke="#777" stroke-width="1"/></svg>
<div class="a" style="left:344px;top:743.0px;width:14px;height:14px;border:1px solid #dcdee2;border-radius:2px;background:#fff"></div>
<div class="t" style="left:399px;top:741.0px;font-size:12px;color:#333;font-weight:normal;">31</div>
<svg style="left:531px;top:732.5px" width="36" height="36" viewBox="0 0 36 36">
<circle cx="18.3" cy="11.5" r="9.3" fill="none" stroke="#111" stroke-width="0.9"/>
<path d="M18.3 2.2 A9.3 9.3 0 0 1 18.3 20.8 Z" fill="#111"/>
<path d="M18.6 16.5 L21.6 9.5 L24.6 16.5 M19.6 14.3 H23.6" fill="none" stroke="#fff" stroke-width="0.6"/>
<path d="M18.3 16 L18.6 16.5" stroke="#111" stroke-width="0.6"/>
<text x="1.2" y="28.5" font-size="6.8" fill="#555" font-family="Liberation Sans" textLength="33.7" lengthAdjust="spacingAndGlyphs">AMERICAN</text>
<text x="6.5" y="35.3" font-size="6.8" fill="#555" font-family="Liberation Sans" textLength="23.6" lengthAdjust="spacingAndGlyphs">DREAM</text>
</svg>
<div class="t" style="left:624.5px;top:741.0px;font-size:12px;color:#333;font-weight:normal;">123456</div>
<div class="t" style="left:861px;top:741.0px;font-size:12px;color:#333;font-weight:normal;">否</div>
<div class="t" style="left:1002px;top:741.0px;font-size:12px;color:#333;font-weight:normal;">无</div>
<div class="t" style="left:1143px;top:741.0px;font-size:12px;color:#333;font-weight:normal;">无</div>
<div class="t" style="left:1300px;top:741.0px;font-size:12px;color:#333;font-weight:normal;">736234744</div>
<div class="t" style="left:1457px;top:741.0px;font-size:12px;color:#333;font-weight:normal;">H5</div>
<div class="t" style="left:1614px;top:741.0px;font-size:12px;color:#333;font-weight:normal;">0.00</div>
<div class="t" style="left:1771px;top:741.0px;font-size:12px;color:#1a56e6;font-weight:normal;">详情</div>
<div class="a" style="left:1803px;top:744.5px;width:1px;height:12px;background:#e6e8ee"></div>
<div class="t" style="left:1812px;top:741.0px;font-size:12px;color:#1a56e6;font-weight:normal;">更多</div>
<svg style="left:1842px;top:748.0px" width="10" height="6" viewBox="0 0 10 6"><path d="M0.8 0.8 L5 5 L9.2 0.8" fill="none" stroke="#4d75dc" stroke-width="0.9"/></svg>
<div class="a" style="left:286px;top:830px;width:1595px;height:1px;background:#e8eaec"></div>
<svg style="left:309px;top:799.0px" width="6" height="10" viewBox="0 0 6 10"><path d="M0.3 0.8 L4.6 5.2 L0.3 9.6" fill="none" stroke="#777" stroke-width="1"/></svg>
<div class="a" style="left:344px;top:796.0px;width:14px;height:14px;border:1px solid #dcdee2;border-radius:2px;background:#fff"></div>
<div class="t" style="left:399px;top:794.0px;font-size:12px;color:#333;font-weight:normal;">30</div>
<div class="a" style="left:531px;top:785.5px;width:36px;height:36px;background:#fafafa"></div>
<svg style="left:544px;top:799.5px" width="11" height="8" viewBox="0 0 11 8"><rect width="11" height="8" fill="#d8d8d8"/><path d="M1 7.5 L4 4 L6 6 L8 5 L10 7.5 Z" fill="#fafafa"/></svg>
<div class="t" style="left:624.5px;top:794.0px;font-size:12px;color:#333;font-weight:normal;"></div>
<div class="t" style="left:861px;top:794.0px;font-size:12px;color:#333;font-weight:normal;">否</div>
<div class="t" style="left:1002px;top:794.0px;font-size:12px;color:#333;font-weight:normal;">无</div>
<div class="t" style="left:1143px;top:794.0px;font-size:12px;color:#333;font-weight:normal;">无</div>
<div class="t" style="left:1300px;top:794.0px;font-size:12px;color:#333;font-weight:normal;"></div>
<div class="t" style="left:1457px;top:794.0px;font-size:12px;color:#333;font-weight:normal;">APP</div>
<div class="t" style="left:1614px;top:794.0px;font-size:12px;color:#333;font-weight:normal;">0.00</div>
<div class="t" style="left:1771px;top:794.0px;font-size:12px;color:#1a56e6;font-weight:normal;">详情</div>
<div class="a" style="left:1803px;top:797.5px;width:1px;height:12px;background:#e6e8ee"></div>
<div class="t" style="left:1812px;top:794.0px;font-size:12px;color:#1a56e6;font-weight:normal;">更多</div>
<svg style="left:1842px;top:801.0px" width="10" height="6" viewBox="0 0 10 6"><path d="M0.8 0.8 L5 5 L9.2 0.8" fill="none" stroke="#4d75dc" stroke-width="0.9"/></svg>
<div class="a" style="left:286px;top:883px;width:1595px;height:1px;background:#e8eaec"></div>
<svg style="left:309px;top:852.0px" width="6" height="10" viewBox="0 0 6 10"><path d="M0.3 0.8 L4.6 5.2 L0.3 9.6" fill="none" stroke="#777" stroke-width="1"/></svg>
<div class="a" style="left:344px;top:849.0px;width:14px;height:14px;border:1px solid #dcdee2;border-radius:2px;background:#fff"></div>
<div class="t" style="left:399px;top:847.0px;font-size:12px;color:#333;font-weight:normal;">29</div>
<svg style="left:531px;top:838.5px" width="36" height="36" viewBox="0 0 36 36">
<circle cx="18.3" cy="11.5" r="9.3" fill="none" stroke="#111" stroke-width="0.9"/>
<path d="M18.3 2.2 A9.3 9.3 0 0 1 18.3 20.8 Z" fill="#111"/>
<path d="M18.6 16.5 L21.6 9.5 L24.6 16.5 M19.6 14.3 H23.6" fill="none" stroke="#fff" stroke-width="0.6"/>
<path d="M18.3 16 L18.6 16.5" stroke="#111" stroke-width="0.6"/>
<text x="1.2" y="28.5" font-size="6.8" fill="#555" font-family="Liberation Sans" textLength="33.7" lengthAdjust="spacingAndGlyphs">AMERICAN</text>
<text x="6.5" y="35.3" font-size="6.8" fill="#555" font-family="Liberation Sans" textLength="23.6" lengthAdjust="spacingAndGlyphs">DREAM</text>
</svg>
<div class="t" style="left:624.5px;top:847.0px;font-size:12px;color:#333;font-weight:normal;">hulu</div>
<div class="t" style="left:861px;top:847.0px;font-size:12px;color:#333;font-weight:normal;">否</div>
<div class="t" style="left:1002px;top:847.0px;font-size:12px;color:#333;font-weight:normal;">无</div>
<div class="t" style="left:1143px;top:847.0px;font-size:12px;color:#333;font-weight:normal;">无</div>
<div class="t" style="left:1300px;top:847.0px;font-size:12px;color:#333;font-weight:normal;">13464646464</div>
<div class="t" style="left:1457px;top:847.0px;font-size:12px;color:#333;font-weight:normal;">H5</div>
<div class="t" style="left:1614px;top:847.0px;font-size:12px;color:#333;font-weight:normal;">0.00</div>
<div class="t" style="left:1771px;top:847.0px;font-size:12px;color:#1a56e6;font-weight:normal;">详情</div>
<div class="a" style="left:1803px;top:850.5px;width:1px;height:12px;background:#e6e8ee"></div>
<div class="t" style="left:1812px;top:847.0px;font-size:12px;color:#1a56e6;font-weight:normal;">更多</div>
<svg style="left:1842px;top:854.0px" width="10" height="6" viewBox="0 0 10 6"><path d="M0.8 0.8 L5 5 L9.2 0.8" fill="none" stroke="#4d75dc" stroke-width="0.9"/></svg>
<div class="a" style="left:286px;top:936px;width:1595px;height:1px;background:#e8eaec"></div>
<svg style="left:309px;top:905.0px" width="6" height="10" viewBox="0 0 6 10"><path d="M0.3 0.8 L4.6 5.2 L0.3 9.6" fill="none" stroke="#777" stroke-width="1"/></svg>
<div class="a" style="left:344px;top:902.0px;width:14px;height:14px;border:1px solid #dcdee2;border-radius:2px;background:#fff"></div>
<div class="t" style="left:399px;top:900.0px;font-size:12px;color:#333;font-weight:normal;">28</div>
<svg style="left:531px;top:891.5px" width="36" height="36" viewBox="0 0 36 36">
<circle cx="18.3" cy="11.5" r="9.3" fill="none" stroke="#111" stroke-width="0.9"/>
<path d="M18.3 2.2 A9.3 9.3 0 0 1 18.3 20.8 Z" fill="#111"/>
<path d="M18.6 16.5 L21.6 9.5 L24.6 16.5 M19.6 14.3 H23.6" fill="none" stroke="#fff" stroke-width="0.6"/>
<path d="M18.3 16 L18.6 16.5" stroke="#111" stroke-width="0.6"/>
<text x="1.2" y="28.5" font-size="6.8" fill="#555" font-family="Liberation Sans" textLength="33.7" lengthAdjust="spacingAndGlyphs">AMERICAN</text>
<text x="6.5" y="35.3" font-size="6.8" fill="#555" font-family="Liberation Sans" textLength="23.6" lengthAdjust="spacingAndGlyphs">DREAM</text>
</svg>
<div class="t" style="left:624.5px;top:900.0px;font-size:12px;color:#333;font-weight:normal;">ziazia</div>
<div class="t" style="left:861px;top:900.0px;font-size:12px;color:#333;font-weight:normal;">否</div>
<div class="t" style="left:1002px;top:900.0px;font-size:12px;color:#333;font-weight:normal;">无</div>
<div class="t" style="left:1143px;top:900.0px;font-size:12px;color:#333;font-weight:normal;">无</div>
<div class="t" style="left:1300px;top:900.0px;font-size:12px;color:#333;font-weight:normal;">13589006781</div>
<div class="t" style="left:1457px;top:900.0px;font-size:12px;color:#333;font-weight:normal;">H5</div>
<div class="t" style="left:1614px;top:900.0px;font-size:12px;color:#333;font-weight:normal;">207.84</div>
<div class="t" style="left:1771px;top:900.0px;font-size:12px;color:#1a56e6;font-weight:normal;">详情</div>
<div class="a" style="left:1803px;top:903.5px;width:1px;height:12px;background:#e6e8ee"></div>
<div class="t" style="left:1812px;top:900.0px;font-size:12px;color:#1a56e6;font-weight:normal;">更多</div>
<svg style="left:1842px;top:907.0px" width="10" height="6" viewBox="0 0 10 6"><path d="M0.8 0.8 L5 5 L9.2 0.8" fill="none" stroke="#4d75dc" stroke-width="0.9"/></svg>
<div class="a" style="left:286px;top:989px;width:1595px;height:1px;background:#e8eaec"></div>
<svg style="left:309px;top:958.0px" width="6" height="10" viewBox="0 0 6 10"><path d="M0.3 0.8 L4.6 5.2 L0.3 9.6" fill="none" stroke="#777" stroke-width="1"/></svg>
<div class="a" style="left:344px;top:955.0px;width:14px;height:14px;border:1px solid #dcdee2;border-radius:2px;background:#fff"></div>
<div class="t" style="left:399px;top:953.0px;font-size:12px;color:#333;font-weight:normal;">27</div>
<svg style="left:531px;top:944.5px" width="36" height="36" viewBox="0 0 36 36">
<circle cx="18.3" cy="11.5" r="9.3" fill="none" stroke="#111" stroke-width="0.9"/>
<path d="M18.3 2.2 A9.3 9.3 0 0 1 18.3 20.8 Z" fill="#111"/>
<path d="M18.6 16.5 L21.6 9.5 L24.6 16.5 M19.6 14.3 H23.6" fill="none" stroke="#fff" stroke-width="0.6"/>
<path d="M18.3 16 L18.6 16.5" stroke="#111" stroke-width="0.6"/>
<text x="1.2" y="28.5" font-size="6.8" fill="#555" font-family="Liberation Sans" textLength="33.7" lengthAdjust="spacingAndGlyphs">AMERICAN</text>
<text x="6.5" y="35.3" font-size="6.8" fill="#555" font-family="Liberation Sans" textLength="23.6" lengthAdjust="spacingAndGlyphs">DREAM</text>
</svg>
<div class="t" style="left:624.5px;top:953.0px;font-size:12px;color:#333;font-weight:normal;">夏夏</div>
<div class="t" style="left:861px;top:953.0px;font-size:12px;color:#333;font-weight:normal;">否</div>
<div class="t" style="left:1002px;top:953.0px;font-size:12px;color:#333;font-weight:normal;">无</div>
<div class="t" style="left:1143px;top:953.0px;font-size:12px;color:#333;font-weight:normal;">无</div>
<div class="t" style="left:1300px;top:953.0px;font-size:12px;color:#333;font-weight:normal;">13156890099</div>
<div class="t" style="left:1457px;top:953.0px;font-size:12px;color:#333;font-weight:normal;">H5</div>
<div class="t" style="left:1614px;top:953.0px;font-size:12px;color:#333;font-weight:normal;">0.00</div>
<div class="t" style="left:1771px;top:953.0px;font-size:12px;color:#1a56e6;font-weight:normal;">详情</div>
<div class="a" style="left:1803px;top:956.5px;width:1px;height:12px;background:#e6e8ee"></div>
<div class="t" style="left:1812px;top:953.0px;font-size:12px;color:#1a56e6;font-weight:normal;">更多</div>
<svg style="left:1842px;top:960.0px" width="10" height="6" viewBox="0 0 10 6"><path d="M0.8 0.8 L5 5 L9.2 0.8" fill="none" stroke="#4d75dc" stroke-width="0.9"/></svg>
<div class="a" style="left:286px;top:1042px;width:1595px;height:1px;background:#e8eaec"></div>
<svg style="left:309px;top:1011.0px" width="6" height="10" viewBox="0 0 6 10"><path d="M0.3 0.8 L4.6 5.2 L0.3 9.6" fill="none" stroke="#777" stroke-width="1"/></svg>
<div class="a" style="left:344px;top:1008.0px;width:14px;height:14px;border:1px solid #dcdee2;border-radius:2px;background:#fff"></div>
<div class="t" style="left:399px;top:1006.0px;font-size:12px;color:#333;font-weight:normal;">26</div>
<svg style="left:531px;top:997.5px" width="36" height="36" viewBox="0 0 36 36">
<circle cx="18.3" cy="11.5" r="9.3" fill="none" stroke="#111" stroke-width="0.9"/>
<path d="M18.3 2.2 A9.3 9.3 0 0 1 18.3 20.8 Z" fill="#111"/>
<path d="M18.6 16.5 L21.6 9.5 L24.6 16.5 M19.6 14.3 H23.6" fill="none" stroke="#fff" stroke-width="0.6"/>
<path d="M18.3 16 L18.6 16.5" stroke="#111" stroke-width="0.6"/>
<text x="1.2" y="28.5" font-size="6.8" fill="#555" font-family="Liberation Sans" textLength="33.7" lengthAdjust="spacingAndGlyphs">AMERICAN</text>
<text x="6.5" y="35.3" font-size="6.8" fill="#555" font-family="Liberation Sans" textLength="23.6" lengthAdjust="spacingAndGlyphs">DREAM</text>
</svg>
<div class="t" style="left:624.5px;top:1006.0px;font-size:12px;color:#333;font-weight:normal;">kehu</div>
<div class="t" style="left:861px;top:1006.0px;font-size:12px;color:#333;font-weight:normal;">否</div>
<div class="t" style="left:1002px;top:1006.0px;font-size:12px;color:#333;font-weight:normal;">无</div>
<div class="t" style="left:1143px;top:1006.0px;font-size:12px;color:#333;font-weight:normal;">无</div>
<div class="t" style="left:1300px;top:1006.0px;font-size:12px;color:#333;font-weight:normal;">13156890088</div>
<div class="t" style="left:1457px;top:1006.0px;font-size:12px;color:#333;font-weight:normal;">H5</div>
<div class="t" style="left:1614px;top:1006.0px;font-size:12px;color:#333;font-weight:normal;">0.00</div>
<div class="t" style="left:1771px;top:1006.0px;font-size:12px;color:#1a56e6;font-weight:normal;">详情</div>
<div class="a" style="left:1803px;top:1009.5px;width:1px;height:12px;background:#e6e8ee"></div>
<div class="t" style="left:1812px;top:1006.0px;font-size:12px;color:#1a56e6;font-weight:normal;">更多</div>
<svg style="left:1842px;top:1013.0px" width="10" height="6" viewBox="0 0 10 6"><path d="M0.8 0.8 L5 5 L9.2 0.8" fill="none" stroke="#4d75dc" stroke-width="0.9"/></svg>
<div class="a" style="left:286px;top:1095px;width:1595px;height:1px;background:#e8eaec"></div>
<svg style="left:309px;top:1064.0px" width="6" height="10" viewBox="0 0 6 10"><path d="M0.3 0.8 L4.6 5.2 L0.3 9.6" fill="none" stroke="#777" stroke-width="1"/></svg>
<div class="a" style="left:344px;top:1061.0px;width:14px;height:14px;border:1px solid #dcdee2;border-radius:2px;background:#fff"></div>
<div class="t" style="left:399px;top:1059.0px;font-size:12px;color:#333;font-weight:normal;">19</div>
<svg style="left:531px;top:1050.5px" width="36" height="36" viewBox="0 0 36 36">
<circle cx="18.3" cy="11.5" r="9.3" fill="none" stroke="#111" stroke-width="0.9"/>
<path d="M18.3 2.2 A9.3 9.3 0 0 1 18.3 20.8 Z" fill="#111"/>
<path d="M18.6 16.5 L21.6 9.5 L24.6 16.5 M19.6 14.3 H23.6" fill="none" stroke="#fff" stroke-width="0.6"/>
<path d="M18.3 16 L18.6 16.5" stroke="#111" stroke-width="0.6"/>
<text x="1.2" y="28.5" font-size="6.8" fill="#555" font-family="Liberation Sans" textLength="33.7" lengthAdjust="spacingAndGlyphs">AMERICAN</text>
<text x="6.5" y="35.3" font-size="6.8" fill="#555" font-family="Liberation Sans" textLength="23.6" lengthAdjust="spacingAndGlyphs">DREAM</text>
</svg>
<div class="t" style="left:624.5px;top:1059.0px;font-size:12px;color:#333;font-weight:normal;">正昊</div>
<div class="t" style="left:861px;top:1059.0px;font-size:12px;color:#333;font-weight:normal;">否</div>
<div class="t" style="left:1002px;top:1059.0px;font-size:12px;color:#333;font-weight:normal;">无</div>
<div class="t" style="left:1143px;top:1059.0px;font-size:12px;color:#333;font-weight:normal;">A类客户</div>
<div class="t" style="left:1300px;top:1059.0px;font-size:12px;color:#333;font-weight:normal;">18866666666</div>
<div class="t" style="left:1457px;top:1059.0px;font-size:12px;color:#333;font-weight:normal;">H5</div>
<div class="t" style="left:1614px;top:1059.0px;font-size:12px;color:#333;font-weight:normal;">78749.00</div>
<div class="t" style="left:1771px;top:1059.0px;font-size:12px;color:#1a56e6;font-weight:normal;">详情</div>
<div class="a" style="left:1803px;top:1062.5px;width:1px;height:12px;background:#e6e8ee"></div>
<div class="t" style="left:1812px;top:1059.0px;font-size:12px;color:#1a56e6;font-weight:normal;">更多</div>
<svg style="left:1842px;top:1066.0px" width="10" height="6" viewBox="0 0 10 6"><path d="M0.8 0.8 L5 5 L9.2 0.8" fill="none" stroke="#4d75dc" stroke-width="0.9"/></svg>
<div class="a" style="left:286px;top:1148px;width:1595px;height:1px;background:#e8eaec"></div>
<svg style="left:309px;top:1117.0px" width="6" height="10" viewBox="0 0 6 10"><path d="M0.3 0.8 L4.6 5.2 L0.3 9.6" fill="none" stroke="#777" stroke-width="1"/></svg>
<div class="a" style="left:344px;top:1114.0px;width:14px;height:14px;border:1px solid #dcdee2;border-radius:2px;background:#fff"></div>
<div class="t" style="left:399px;top:1112.0px;font-size:12px;color:#333;font-weight:normal;">10</div>
<svg style="left:531px;top:1103.5px" width="36" height="36" viewBox="0 0 36 36">
<circle cx="18.3" cy="11.5" r="9.3" fill="none" stroke="#111" stroke-width="0.9"/>
<path d="M18.3 2.2 A9.3 9.3 0 0 1 18.3 20.8 Z" fill="#111"/>
<path d="M18.6 16.5 L21.6 9.5 L24.6 16.5 M19.6 14.3 H23.6" fill="none" stroke="#fff" stroke-width="0.6"/>
<path d="M18.3 16 L18.6 16.5" stroke="#111" stroke-width="0.6"/>
<text x="1.2" y="28.5" font-size="6.8" fill="#555" font-family="Liberation Sans" textLength="33.7" lengthAdjust="spacingAndGlyphs">AMERICAN</text>
<text x="6.5" y="35.3" font-size="6.8" fill="#555" font-family="Liberation Sans" textLength="23.6" lengthAdjust="spacingAndGlyphs">DREAM</text>
</svg>
<div class="t" style="left:624.5px;top:1112.0px;font-size:12px;color:#333;font-weight:normal;">wode</div>
<div class="t" style="left:861px;top:1112.0px;font-size:12px;color:#333;font-weight:normal;">否</div>
<div class="t" style="left:1002px;top:1112.0px;font-size:12px;color:#333;font-weight:normal;">无</div>
<div class="t" style="left:1143px;top:1112.0px;font-size:12px;color:#333;font-weight:normal;">无</div>
<div class="t" style="left:1300px;top:1112.0px;font-size:12px;color:#333;font-weight:normal;">231323</div>
<div class="t" style="left:1457px;top:1112.0px;font-size:12px;color:#333;font-weight:normal;">H5</div>
<div class="t" style="left:1614px;top:1112.0px;font-size:12px;color:#333;font-weight:normal;">1000.00</div>
<div class="t" style="left:1771px;top:1112.0px;font-size:12px;color:#1a56e6;font-weight:normal;">详情</div>
<div class="a" style="left:1803px;top:1115.5px;width:1px;height:12px;background:#e6e8ee"></div>
<div class="t" style="left:1812px;top:1112.0px;font-size:12px;color:#1a56e6;font-weight:normal;">更多</div>
<svg style="left:1842px;top:1119.0px" width="10" height="6" viewBox="0 0 10 6"><path d="M0.8 0.8 L5 5 L9.2 0.8" fill="none" stroke="#4d75dc" stroke-width="0.9"/></svg>
<svg style="left:1905px;top:1160px" width="12" height="11" viewBox="0 0 12 11"><path d="M12 3 Q12 11 4 11 L12 11 Z" fill="#6f7b8a"/></svg>
</body></html>
